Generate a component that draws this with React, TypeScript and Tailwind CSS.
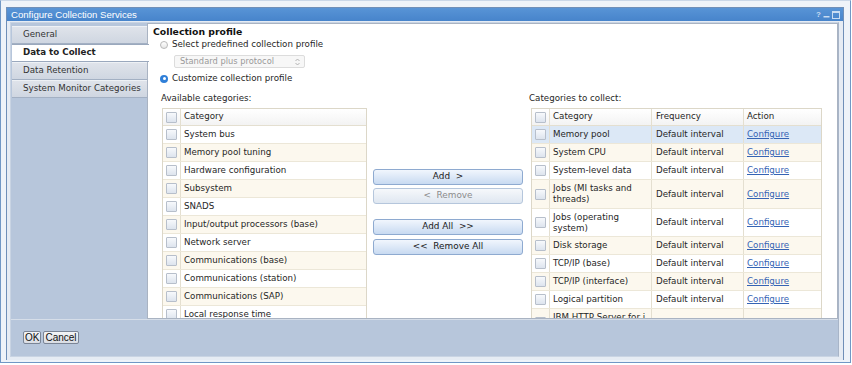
import React from "react";

const font = "font-['DejaVu_Sans',sans-serif]";

function Check() {
  return (
    <span className="block w-[11px] h-[11px] border border-[#b7bfcb] rounded-[1px] bg-linear-to-b from-[#f7f9fc] to-[#dde4ee]" />
  );
}

const leftRows = [
  "System bus",
  "Memory pool tuning",
  "Hardware configuration",
  "Subsystem",
  "SNADS",
  "Input/output processors (base)",
  "Network server",
  "Communications (base)",
  "Communications (station)",
  "Communications (SAP)",
  "Local response time",
  "Communications (LAN)",
];

type RRow = { name: React.ReactNode; h: number; sel?: boolean };
const rightRows: RRow[] = [
  { name: "Memory pool", h: 18, sel: true },
  { name: "System CPU", h: 18 },
  { name: "System-level data", h: 18 },
  { name: <>Jobs (MI tasks and<br />threads)</>, h: 29 },
  { name: <>Jobs (operating<br />system)</>, h: 28 },
  { name: "Disk storage", h: 18 },
  { name: "TCP/IP (base)", h: 18 },
  { name: "TCP/IP (interface)", h: 18 },
  { name: "Logical partition", h: 18 },
  { name: <>IBM HTTP Server for i<br />(powered by Apache)</>, h: 28 },
];

function Btn({ label, disabled }: { label: string; disabled?: boolean }) {
  return (
    <div
      className={
        "h-[16px] w-[150px] rounded-[3px] border flex items-center justify-center whitespace-pre text-[8.9px] " +
        (disabled
          ? "border-[#b5c6dc] bg-linear-to-b from-[#f6f8fb] to-[#dfe7f1] text-[#8c8c8c]"
          : "border-[#8eaad0] bg-linear-to-b from-[#f1f6fd] to-[#c8daf1] text-[#1a1a1a]")
      }
    >
      {label}
    </div>
  );
}

export default function App() {
  return (
    <div className={"w-[852px] h-[365px] bg-white " + font}>
      <div className="w-[851px] h-[363px] border border-[#7097c5] border-t-[#c9d7e8] bg-[#eef3f9] pl-[5px] pr-[6px] pt-[6px] pb-[2px]">
        <div className="h-full flex flex-col border border-[#6f8fb8] border-b-0">
          {/* title bar */}
          <div className="h-[13px] bg-linear-to-b from-[#5894d6] to-[#4784cb] flex items-center justify-between pl-[4px] pr-[3px]">
            <span className="text-white text-[9.6px] leading-none font-['Liberation_Sans',sans-serif]">
              Configure Collection Services
            </span>
            <div className="flex items-center gap-[2px] text-[#c9dcf2]">
              <span className="text-[8px] leading-none font-bold font-['Liberation_Sans',sans-serif]">?</span>
              <svg width="7" height="7" viewBox="0 0 7 7">
                <rect x="0.5" y="5" width="6" height="1.5" fill="#c9dcf2" />
              </svg>
              <svg width="8" height="8" viewBox="0 0 8 8">
                <rect x="0.5" y="0.5" width="7" height="7" fill="none" stroke="#c9dcf2" />
                <rect x="0.5" y="0.5" width="7" height="1.5" fill="#c9dcf2" />
              </svg>
            </div>
          </div>
          {/* body */}
          <div className="flex-1 bg-[#e6ecf4] pl-[3px] pr-[4px] pt-[1px] pb-[3px]">
            <div className="h-full flex flex-col bg-[#b7c6db] border border-[#c9d4e3] border-r-[#a8b5c8]">
              <div className="flex h-[296px]">
                {/* nav */}
                <div className="w-[136px] pt-[3px] pl-px flex flex-col text-[8.7px] text-[#333]">
                  {[
                    { t: "General" },
                    { t: "Data to Collect", sel: true },
                    { t: "Data Retention" },
                    { t: "System Monitor Categories" },
                  ].map((it) => (
                    <div
                      key={it.t}
                      className={
                        "h-[18px] flex items-center pl-[11px] border-b border-t " +
                        (it.sel
                          ? "bg-white font-bold text-[#222] border-t-[#9aa8bd] border-b-[#9aa8bd] -mr-[2px] relative z-10"
                          : "bg-linear-to-b from-[#dfe3ea] to-[#cfd6e1] border-t-[#eef1f5] border-b-[#a3b0c3]")
                      }
                    >
                      {it.t}
                    </div>
                  ))}
                </div>
                {/* main panel */}
                <div className="flex-1 bg-white border border-[#a9b3c2] overflow-hidden text-[8.7px] text-[#262626]">
                  <div className="pl-[5px] pt-[2px] text-[9.3px] font-bold text-[#111] leading-[12px]">
                    Collection profile
                  </div>
                  <div className="flex items-center h-[11px] pl-[12px] mt-[1px]">
                    <span className="w-[8px] h-[8px] rounded-full border border-[#b8b8b8] bg-linear-to-b from-white to-[#e6e6e6]" />
                    <span className="ml-[4px]">Select predefined collection profile</span>
                  </div>
                  <div className="ml-[26px] mt-[5px] w-[131px] h-[13px] border border-[#dcdcdc] rounded-[2px] bg-[#f7f7f7] flex items-center justify-between pl-[5px] pr-[4px] text-[#9a9a9a] text-[8.3px]">
                    <span>Standard plus protocol</span>
                    <svg width="5" height="8" viewBox="0 0 5 8">
                      <path d="M0.5 3 L2.5 1 L4.5 3 M0.5 5 L2.5 7 L4.5 5" fill="none" stroke="#aaa" strokeWidth="0.9" />
                    </svg>
                  </div>
                  <div className="flex items-center h-[11px] pl-[12px] mt-[5px]">
                    <span className="w-[8px] h-[8px] rounded-full bg-[#2f7fd8] flex items-center justify-center">
                      <span className="w-[3px] h-[3px] rounded-full bg-white" />
                    </span>
                    <span className="ml-[4px]">Customize collection profile</span>
                  </div>
                  <div className="flex mt-[9px]">
                    {/* left column */}
                    <div className="ml-[13px] w-[206px]">
                      <div className="h-[15px] leading-[11px]">Available categories:</div>
                      <div className="ml-px w-[205px] border border-[#dcd7c8] bg-white">
                        <div className="flex h-[17px] border-b border-[#e4dfd0] bg-linear-to-b from-white to-[#f3f3f3]">
                          <div className="w-[18px] border-r border-[#e4dfd0] flex items-center justify-center">
                            <Check />
                          </div>
                          <div className="flex-1 flex items-center pl-[3px]">Category</div>
                        </div>
                        {leftRows.map((r, i) => (
                          <div
                            key={r}
                            className={
                              "flex h-[18px] border-b border-[#ece7d8] " +
                              (i % 2 === 1 ? "bg-[#fcf8ee]" : "bg-white")
                            }
                          >
                            <div className="w-[18px] border-r border-[#e4dfd0] flex items-center justify-center">
                              <Check />
                            </div>
                            <div className="flex-1 flex items-center pl-[3px] whitespace-nowrap">{r}</div>
                          </div>
                        ))}
                      </div>
                    </div>
                    {/* middle buttons */}
                    <div className="w-[162px] pl-[6px] pt-[76px] flex flex-col">
                      <Btn label="Add  >" />
                      <div className="h-[3px]" />
                      <Btn label="<  Remove" disabled />
                      <div className="h-[15px]" />
                      <Btn label="Add All  >>" />
                      <div className="h-[4px]" />
                      <Btn label="<<  Remove All" />
                    </div>
                    {/* right column */}
                    <div className="w-[293px]">
                      <div className="h-[15px] leading-[11px]">Categories to collect:</div>
                      <div className="ml-[2px] w-[291px] border border-[#dcd7c8] bg-white">
                        <div className="flex h-[17px] border-b border-[#e4dfd0] bg-linear-to-b from-white to-[#f3f3f3]">
                          <div className="w-[18px] border-r border-[#e4dfd0] flex items-center justify-center">
                            <Check />
                          </div>
                          <div className="w-[102px] border-r border-[#e4dfd0] flex items-center pl-[3px]">Category</div>
                          <div className="w-[92px] border-r border-[#e4dfd0] flex items-center pl-[4px]">Frequency</div>
                          <div className="flex-1 flex items-center pl-[3px]">Action</div>
                        </div>
                        {rightRows.map((r, i) => (
                          <div
                            key={i}
                            style={{ height: r.h }}
                            className={
                              "flex border-b border-[#ece7d8] leading-[11px] " +
                              (r.sel ? "bg-[#dce8f6]" : i % 2 === 1 ? "bg-[#fcf8ee]" : "bg-white")
                            }
                          >
                            <div className="w-[18px] border-r border-[#e4dfd0] flex items-center justify-center">
                              <Check />
                            </div>
                            <div className="w-[102px] border-r border-[#e4dfd0] flex items-center pl-[3px] whitespace-nowrap">
                              <span>{r.name}</span>
                            </div>
                            <div className="w-[92px] border-r border-[#e4dfd0] flex items-center pl-[4px] whitespace-nowrap">
                              {i < 9 ? "Default interval" : ""}
                            </div>
                            <div className="flex-1 flex items-center pl-[3px]">
                              {i < 9 ? (
                                <span className="text-[#3563b4] underline">Configure</span>
                              ) : null}
                            </div>
                          </div>
                        ))}
                      </div>
                    </div>
                  </div>
                </div>
              </div>
              {/* footer */}
              <div className="flex-1 border-t border-[#d6dee9] pl-[12px] pt-[11px] flex items-start gap-[2px] font-['Liberation_Sans',sans-serif] text-[10px] text-[#111]">
                <div className="h-[13px] px-[1px] border border-[#7b8596] rounded-[2px] bg-linear-to-b from-[#f4f5f7] to-[#d9dde4] flex items-center leading-none">
                  OK
                </div>
                <div className="h-[13px] px-[1px] border border-[#7b8596] rounded-[2px] bg-linear-to-b from-[#f4f5f7] to-[#d9dde4] flex items-center leading-none">
                  Cancel
                </div>
              </div>
            </div>
          </div>
        </div>
      </div>
    </div>
  );
}
